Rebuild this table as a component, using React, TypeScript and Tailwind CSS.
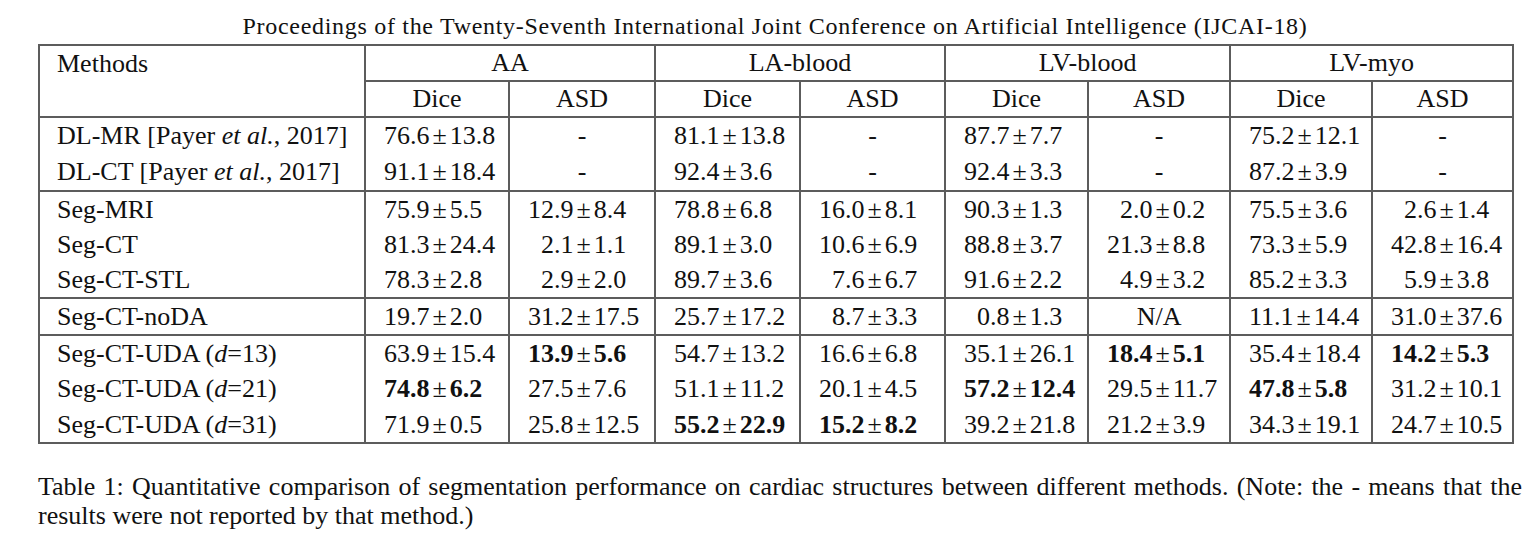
import React from "react";

type Row = { name: React.ReactNode; cells: string[]; h: number; top?: boolean };

const serif = "font-['Liberation_Serif',_'Times_New_Roman',_serif]";

// "*" prefix marks a bold cell; "~" prefix adds a phantom leading digit
const rows: Row[] = [
  { name: <>DL-MR [Payer <i>et al.</i>, 2017]</>, cells: ["76.6±13.8", "-", "81.1±13.8", "-", "87.7±7.7", "-", "75.2±12.1", "-"], h: 37, top: true },
  { name: <>DL-CT [Payer <i>et al.</i>, 2017]</>, cells: ["91.1±18.4", "-", "92.4±3.6", "-", "92.4±3.3", "-", "87.2±3.9", "-"], h: 37 },
  { name: "Seg-MRI", cells: ["75.9±5.5", "12.9±8.4", "78.8±6.8", "16.0±8.1", "90.3±1.3", "~2.0±0.2", "75.5±3.6", "~2.6±1.4"], h: 36, top: true },
  { name: "Seg-CT", cells: ["81.3±24.4", "~2.1±1.1", "89.1±3.0", "10.6±6.9", "88.8±3.7", "21.3±8.8", "73.3±5.9", "42.8±16.4"], h: 35 },
  { name: "Seg-CT-STL", cells: ["78.3±2.8", "~2.9±2.0", "89.7±3.6", "~7.6±6.7", "91.6±2.2", "~4.9±3.2", "85.2±3.3", "~5.9±3.8"], h: 36 },
  { name: "Seg-CT-noDA", cells: ["19.7±2.0", "31.2±17.5", "25.7±17.2", "~8.7±3.3", "~0.8±1.3", "N/A", "11.1±14.4", "31.0±37.6"], h: 37, top: true },
  { name: <>Seg-CT-UDA (<i>d</i>=13)</>, cells: ["63.9±15.4", "*13.9±5.6", "54.7±13.2", "16.6±6.8", "35.1±26.1", "*18.4±5.1", "35.4±18.4", "*14.2±5.3"], h: 36, top: true },
  { name: <>Seg-CT-UDA (<i>d</i>=21)</>, cells: ["*74.8±6.2", "27.5±7.6", "51.1±11.2", "20.1±4.5", "*57.2±12.4", "29.5±11.7", "*47.8±5.8", "31.2±10.1"], h: 36 },
  { name: <>Seg-CT-UDA (<i>d</i>=31)</>, cells: ["71.9±0.5", "25.8±12.5", "*55.2±22.9", "*15.2±8.2", "39.2±21.8", "21.2±3.9", "34.3±19.1", "24.7±10.5"], h: 36 },
];

const widths = [326, 144, 146, 145, 145, 143, 142, 142, 141];
const groups = ["AA", "LA-blood", "LV-blood", "LV-myo"];

function Value({ v }: { v: string }) {
  if (v === "-" || v === "N/A") return <div className="text-center">{v}</div>;
  let s = v;
  const bold = s.startsWith("*");
  if (bold) s = s.slice(1);
  const phantom = s.startsWith("~");
  if (phantom) s = s.slice(1);
  const [a, b] = s.split("±");
  return (
    <div className="pl-[18px] whitespace-nowrap">
      {phantom && <span className="invisible">1</span>}
      <span className={bold ? "font-bold" : ""}>{a}</span>
      <span className="mx-[3px]">±</span>
      <span className={bold ? "font-bold" : ""}>{b}</span>
    </div>
  );
}

export default function App() {
  return (
    <div className={`w-[1534px] h-[535px] bg-white text-[#111] ${serif} overflow-hidden`}>
      <div className="h-[44px] pt-[12px] w-[1550px] text-center text-[24px] leading-[28px] tracking-[0.7px]">
        Proceedings of the Twenty-Seventh International Joint Conference on Artificial Intelligence (IJCAI-18)
      </div>

      <div className="pl-[38px]">
        <table className="table-fixed border-collapse border-2 border-[#5c5c5c] text-[26px] leading-[30px]" style={{ width: 1474 }}>
          <colgroup>
            {widths.map((w, i) => <col key={i} style={{ width: w }} />)}
          </colgroup>
          <thead>
            <tr className="h-[36px]">
              <td className="pl-[17px] align-middle border-r-2 border-[#5c5c5c]">Methods</td>
              {groups.map(g => (
                <td key={g} colSpan={2} className="text-center border-2 border-[#5c5c5c]">{g}</td>
              ))}
            </tr>
            <tr className="h-[36px] border-b-2 border-[#5c5c5c]">
              <td className="border-r-2 border-[#5c5c5c]" />
              {groups.map(g => (
                <React.Fragment key={g}>
                  <td className="text-center border-2 border-[#5c5c5c]">Dice</td>
                  <td className="text-center border-2 border-[#5c5c5c]">ASD</td>
                </React.Fragment>
              ))}
            </tr>
          </thead>
          <tbody>
            {rows.map((r, i) => (
              <tr key={i} className={r.top ? "border-t-2 border-[#5c5c5c]" : ""} style={{ height: r.h }}>
                <td className="pl-[17px] whitespace-nowrap border-r-2 border-[#5c5c5c]">{r.name}</td>
                {r.cells.map((c, j) => (
                  <td key={j} className="p-0 border-r-2 border-[#5c5c5c]">
                    <Value v={c} />
                  </td>
                ))}
              </tr>
            ))}
          </tbody>
        </table>

        <p className="mt-[28px] w-[1484px] text-justify text-[26px] leading-[29px]">
          Table 1: Quantitative comparison of segmentation performance on cardiac structures between different methods. (Note: the - means that the results were not reported by that method.)
        </p>
      </div>
    </div>
  );
}
